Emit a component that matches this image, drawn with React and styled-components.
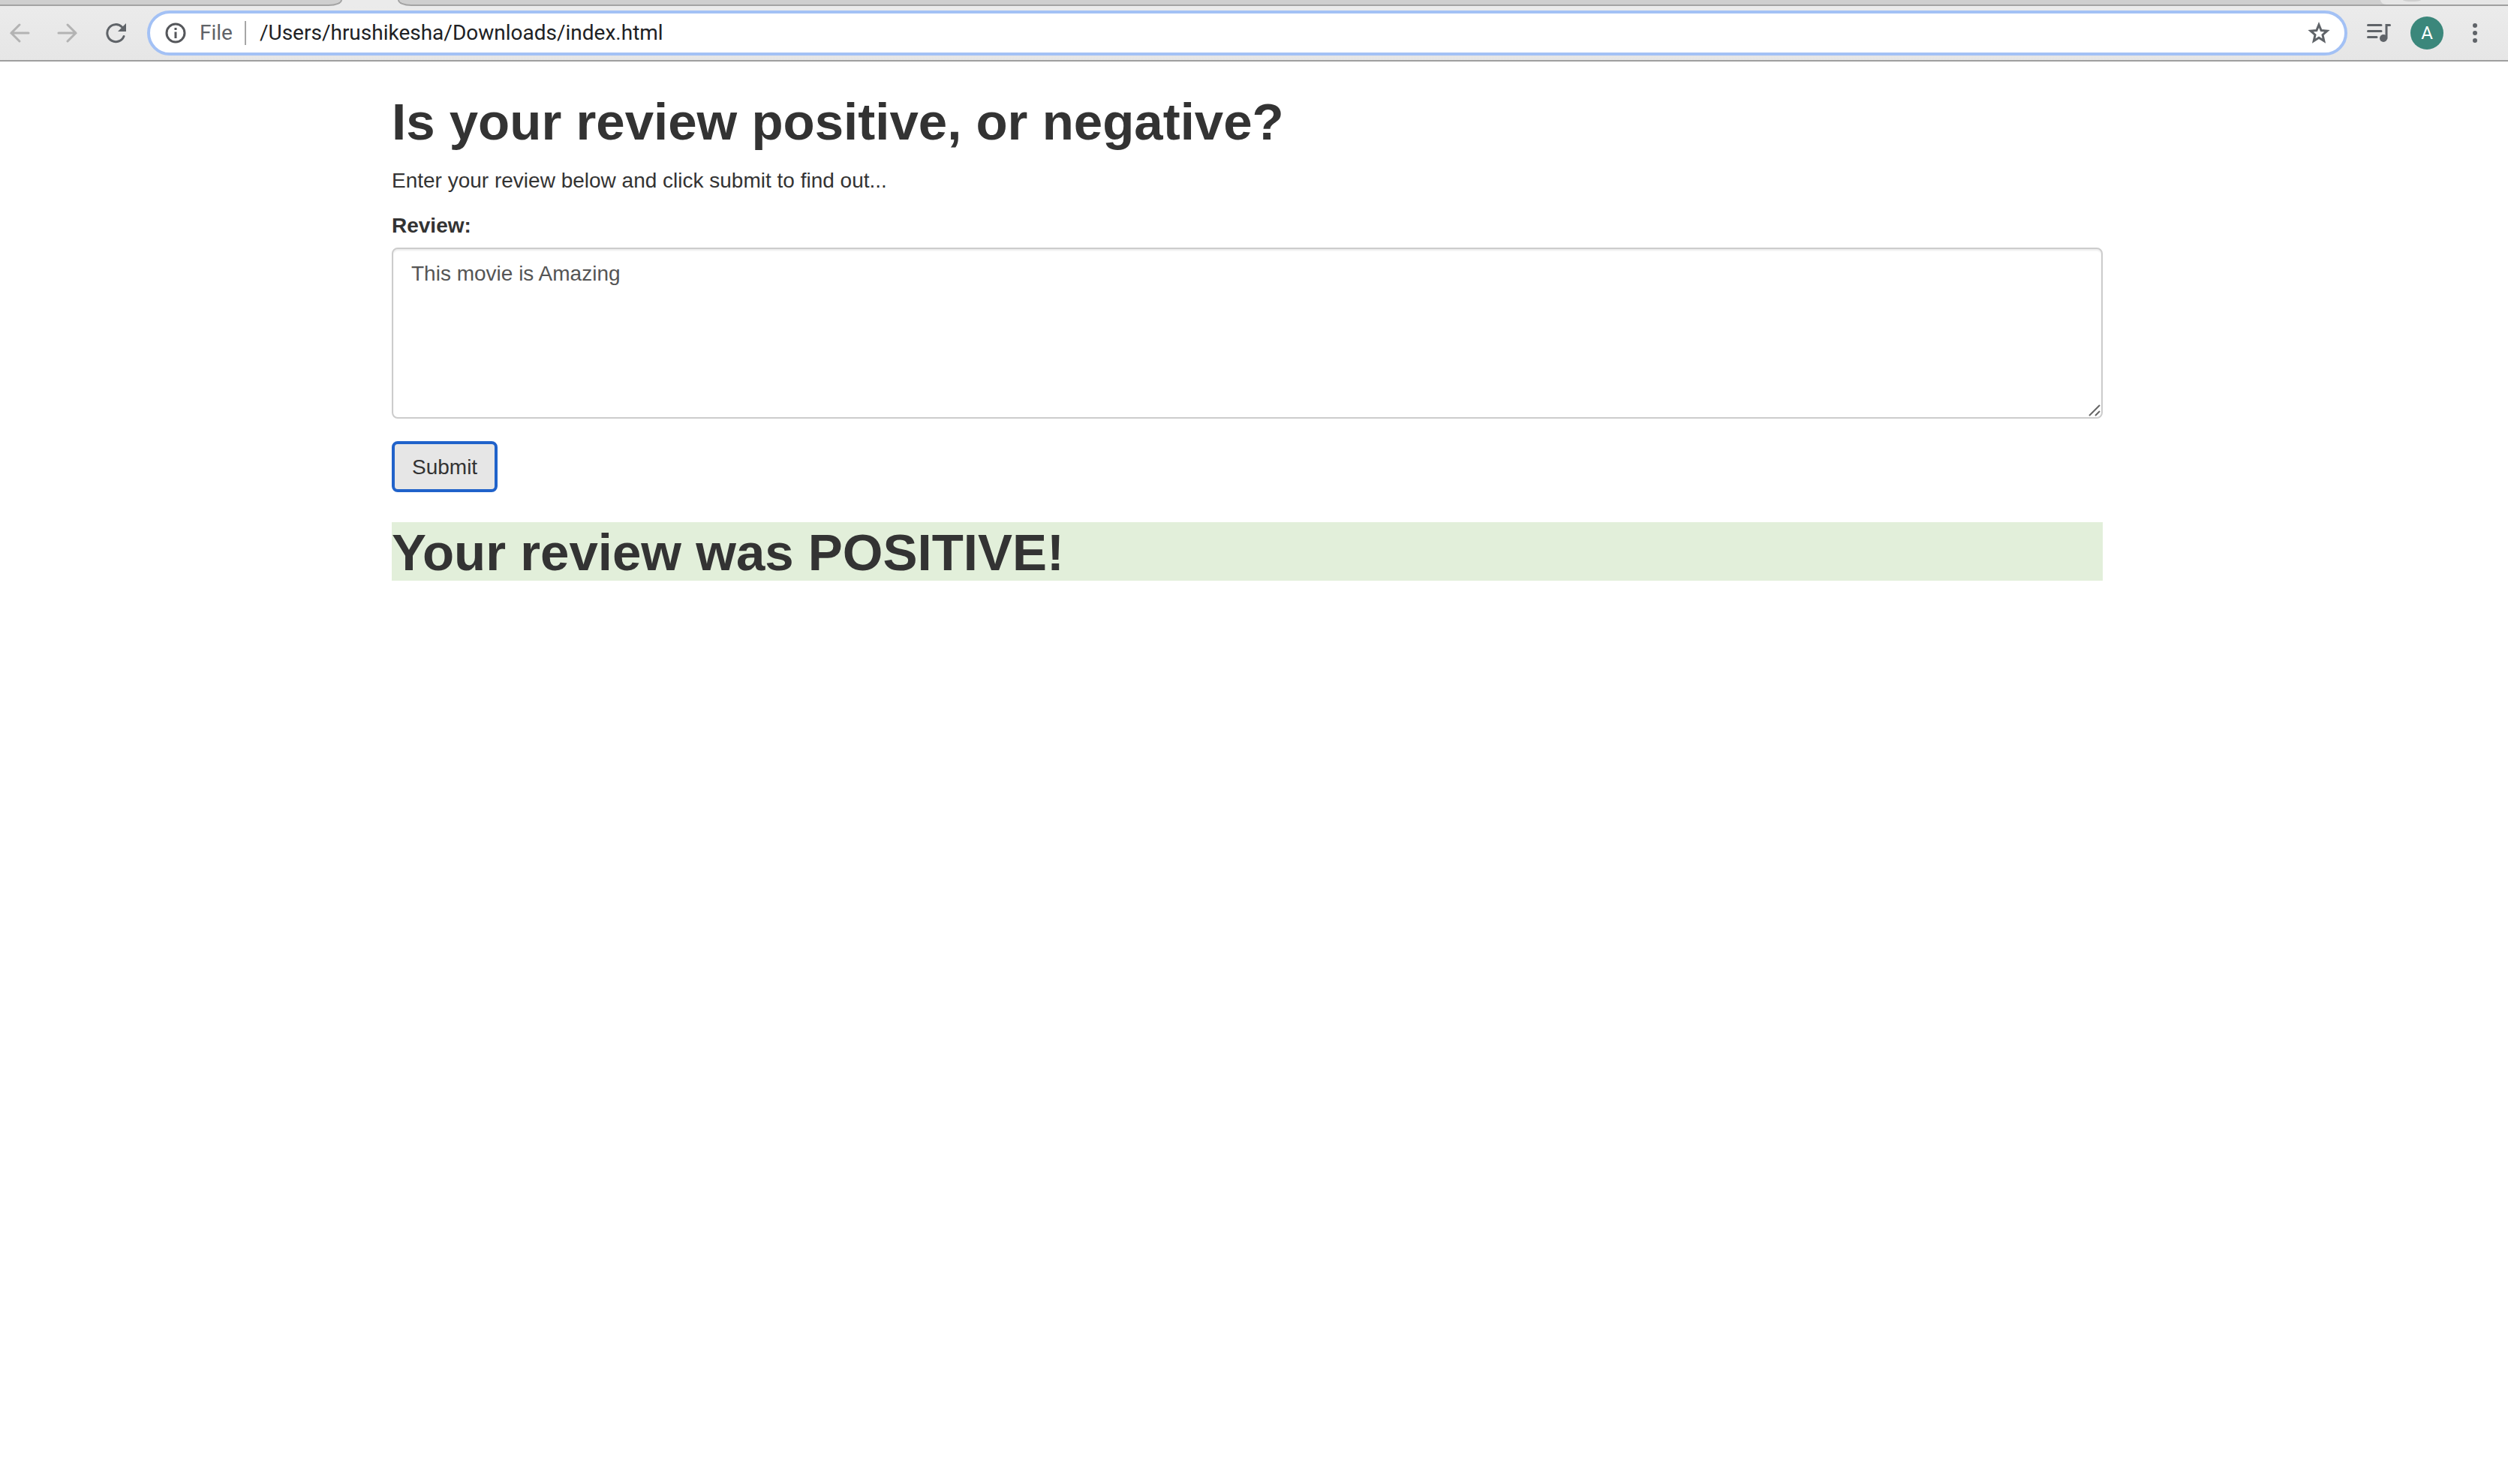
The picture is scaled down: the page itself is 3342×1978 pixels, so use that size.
import React, { useState } from "react";
import styled, { createGlobalStyle } from "styled-components";

const GlobalStyle = createGlobalStyle`
  *, *::before, *::after { box-sizing: border-box; }
  body {
    margin: 0;
    background: #fff;
    color: #333;
    font-family: "Helvetica Neue", "Liberation Sans", Arial, sans-serif;
    font-size: 28px;
    line-height: 40px;
  }
`;

const TabStrip = styled.div`
  display: flex;
  height: 8px;
  background: #ebebeb;
  overflow: hidden;
`;

const InactiveTabs = styled.div`
  flex: ${(p) => (p.$grow ? "1" : "none")};
  width: ${(p) => (p.$grow ? "auto" : "456px")};
  margin-left: ${(p) => (p.$grow ? "74px" : "0")};
  background: #cfcfcf;
  border: 0 solid #a3a3a3;
  border-bottom-width: 2px;
  border-right-width: ${(p) => (p.$grow ? "0" : "2px")};
  border-left-width: ${(p) => (p.$grow ? "2px" : "0")};
  border-bottom-right-radius: ${(p) => (p.$grow ? "0" : "18px 8px")};
  border-bottom-left-radius: ${(p) => (p.$grow ? "18px 8px" : "0")};
`;

const StripEnd = styled.div`
  width: 170px;
  background: #cfcfcf;
  border-bottom: 2px solid #9f9f9f;
`;

const NewTab = styled.div`
  display: flex;
  justify-content: center;
  height: 6px;
  padding-right: 86px;
  background: #e6e6e6;
  border-bottom-left-radius: 8px 6px;
`;

const Toolbar = styled.header`
  display: flex;
  align-items: center;
  height: 74px;
  padding: 0 22px 0 4px;
  background: linear-gradient(#ebebeb, #e6e6e6);
  border-bottom: 2px solid #9f9f9f;
  color: #5f6368;
`;

const IconButton = styled.button`
  display: flex;
  align-items: center;
  justify-content: center;
  flex: none;
  width: ${(p) => p.$width || 64}px;
  height: 44px;
  padding: 0;
  border: 0;
  background: none;
  color: ${(p) => (p.disabled ? "#b3b3b3" : "#5f6368")};
`;

const NavButtons = styled.nav`
  display: flex;
  flex: none;
  width: 192px;
`;

const AddressBar = styled.div`
  display: flex;
  align-items: center;
  flex: 1;
  height: 60px;
  padding: 0 2px 0 20px;
  border: 4px solid #a3c1f5;
  border-radius: 30px;
  background: #fff;
  box-shadow: inset 0 0 0 1px #fff;
  font-family: Roboto, sans-serif;
`;

const Scheme = styled.span`
  margin-left: 18px;
  padding-right: 16px;
  border-right: 2px solid #a6a6a6;
  line-height: 32px;
  color: #5f6368;
`;

const UrlInput = styled.input`
  flex: 1;
  min-width: 0;
  padding: 0 0 0 18px;
  border: 0;
  outline: 0;
  background: none;
  color: #202124;
  font: inherit;
`;

const Avatar = styled.button`
  flex: none;
  width: 44px;
  height: 44px;
  margin-right: 20px;
  padding: 0;
  border: 0;
  border-radius: 50%;
  background: #3b877b;
  color: #fff;
  font: 24px/44px Roboto, sans-serif;
`;

const Page = styled.div`
  padding-right: 18px;
`;

const Container = styled.main`
  max-width: 2340px;
  margin: 0 auto;
  padding: 40px 30px;
`;

const Heading = styled.h1`
  margin: 0;
  padding-top: 4px;
  font-size: 69px;
  font-weight: 700;
  line-height: 74px;
`;

const Result = styled(Heading)`
  margin-top: 40px;
  background: #e2efda;
`;

const Intro = styled.p`
  margin: 21px 0 20px;
`;

const Label = styled.label`
  display: block;
  margin-bottom: 9px;
  font-weight: 700;
`;

const ReviewBox = styled.textarea`
  display: block;
  width: 100%;
  height: 228px;
  margin-bottom: 30px;
  padding: 13px 24px;
  border: 2px solid #ccc;
  border-radius: 8px;
  box-shadow: inset 0 2px 2px rgba(0, 0, 0, 0.075);
  outline: 0;
  background: #fff;
  color: #555;
  font: inherit;
  resize: none;
`;

const ReviewField = styled.div`
  position: relative;
`;

const Grip = styled.svg`
  position: absolute;
  right: 3px;
  bottom: 3px;
`;

const SubmitButton = styled.button`
  display: block;
  padding: 11px 23px 9px;
  border: 4px solid #2062ca;
  border-radius: 8px;
  background: #e6e6e6;
  color: #333;
  font: inherit;
`;

const Stroke = ({ size = 28, width = 3, children }) => (
  <svg width={size} height={size} viewBox="0 0 28 28" fill="none" stroke="currentColor" strokeWidth={width} strokeLinecap="round" aria-hidden="true">
    {children}
  </svg>
);

export default function App() {
  const [review, setReview] = useState("This movie is Amazing");
  const [url, setUrl] = useState("/Users/hrushikesha/Downloads/index.html");

  return (
    <>
      <GlobalStyle />
      <TabStrip>
        <InactiveTabs />
        <InactiveTabs $grow />
        <StripEnd>
          <NewTab>
            <svg width="24" height="2" viewBox="0 0 24 2" aria-hidden="true">
              <ellipse cx="12" cy="0" rx="12" ry="2" fill="#cfcfcf" />
            </svg>
          </NewTab>
        </StripEnd>
      </TabStrip>
      <Toolbar>
        <NavButtons>
          <IconButton $width={44} disabled aria-label="Back">
            <Stroke><path d="M26 14H3M14 3L3 14L14 25" /></Stroke>
          </IconButton>
          <IconButton $width={84} disabled aria-label="Forward">
            <Stroke><path d="M2 14H25M14 3L25 14L14 25" /></Stroke>
          </IconButton>
          <IconButton $width={44} aria-label="Reload">
            <Stroke>
              <path d="M25 18.500A11.500 11.500 0 1 1 22.500 6" />
              <path d="M28 1V12H17Z" fill="currentColor" stroke="none" />
            </Stroke>
          </IconButton>
        </NavButtons>
        <AddressBar>
          <svg width="28" height="28" viewBox="0 0 28 28" fill="none" stroke="#55575b" strokeWidth="3" aria-hidden="true">
            <circle cx="14" cy="14" r="12" />
            <path d="M14 12.500V21M14 7V10" />
          </svg>
          <Scheme>File</Scheme>
          <UrlInput aria-label="Address" value={url} onChange={(e) => setUrl(e.target.value)} />
          <IconButton aria-label="Bookmark">
            <svg width="30" height="30" viewBox="0 0 30 30" fill="none" stroke="currentColor" strokeWidth="3" aria-hidden="true">
              <path d="M15 4L18.100 11.500L26 12.200L20 17.500L21.800 25.500L15 21.200L8.200 25.500L10 17.500L4 12.200L11.900 11.500Z" />
            </svg>
          </IconButton>
        </AddressBar>
        <IconButton $width={84} aria-label="Media controls">
          <svg width="32" height="26" viewBox="0 0 32 26" fill="none" stroke="currentColor" strokeWidth="3" strokeLinecap="round" aria-hidden="true">
            <path d="M1.500 2.500H19M1.500 10.500H19M1.500 18.500H13" />
            <path d="M26 20V2.500H30.500" />
            <circle cx="22" cy="20" r="5" fill="currentColor" stroke="none" />
          </svg>
        </IconButton>
        <Avatar aria-label="Profile">A</Avatar>
        <IconButton $width={44} aria-label="Menu">
          <svg width="6" height="26" viewBox="0 0 6 26" fill="currentColor" aria-hidden="true">
            <circle cx="3" cy="3" r="3" />
            <circle cx="3" cy="13" r="3" />
            <circle cx="3" cy="23" r="3" />
          </svg>
        </IconButton>
      </Toolbar>
      <Page>
        <Container>
          <Heading>Is your review positive, or negative?</Heading>
          <Intro>Enter your review below and click submit to find out...</Intro>
          <Label htmlFor="review">Review:</Label>
          <ReviewField>
            <ReviewBox id="review" value={review} onChange={(e) => setReview(e.target.value)} />
            <Grip width="16" height="16" viewBox="0 0 16 16" stroke="#666" strokeWidth="2" aria-hidden="true">
              <path d="M1 15L15 1M9 15L15 9" />
            </Grip>
          </ReviewField>
          <SubmitButton type="button">Submit</SubmitButton>
          <Result>Your review was POSITIVE!</Result>
        </Container>
      </Page>
    </>
  );
}
